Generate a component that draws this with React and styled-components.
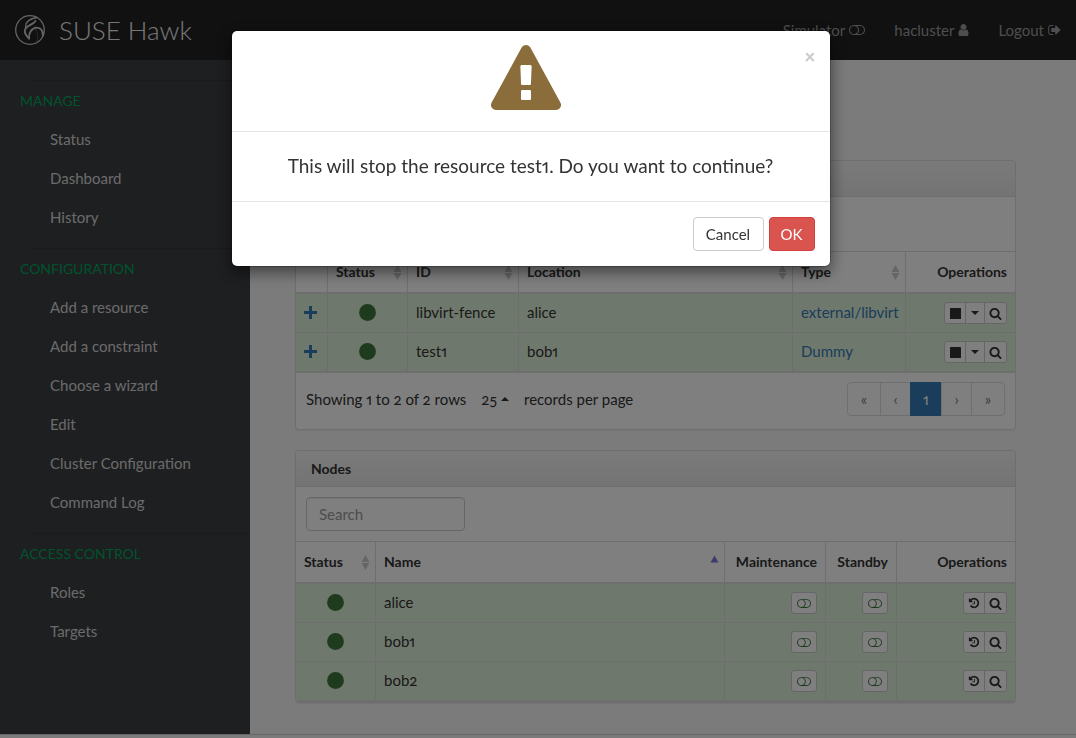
import React from 'react';
import styled, { createGlobalStyle, css } from 'styled-components';

const GlobalStyle = createGlobalStyle`
  *, *::before, *::after { box-sizing: border-box; }
  body {
    margin: 0;
    background: #f6f6f6;
    color: #333;
    font: 15px/20px Lato, "Open Sans", sans-serif;
    font-variant-numeric: oldstyle-nums proportional-nums;
  }
  button, input { font: inherit; color: inherit; }
  a { color: #337ab7; text-decoration: none; }
`;

const Header = styled.header`
  display: flex;
  align-items: center;
  justify-content: space-between;
  height: 60px;
  padding: 0 15px;
  background: #222;
`;

const Brand = styled.a`
  display: flex;
  align-items: center;
  gap: 14px;
  color: #eee;
  font-size: 26px;
  font-weight: 300;
  line-height: 32px;
`;

const TopNav = styled.nav`
  display: flex;
  gap: 29px;
`;

const TopLink = styled.a`
  display: flex;
  align-items: center;
  gap: 4px;
  color: #9d9d9d;
`;

const Body = styled.div`
  display: flex;
  min-height: 673px;
`;

const Sidebar = styled.nav`
  flex: none;
  width: 250px;
  padding-top: 20px;
  background: #3c3e42;
`;

const Section = styled.section`
  margin-bottom: 11px;

  &::before {
    content: "";
    display: block;
    height: 1px;
    margin-left: 30px;
    background: #343639;
  }
`;

const SectionTitle = styled.h2`
  margin: 0;
  padding-left: 20px;
  color: #00a65c;
  font-size: 14px;
  font-weight: 400;
  line-height: 40px;
  height: 39px;
  text-transform: uppercase;
`;

const SideLink = styled.a`
  display: block;
  padding-left: 50px;
  height: 39px;
  line-height: 38px;
  color: #d6d6d6;
`;

const Main = styled.main`
  flex: 1;
  display: flex;
  flex-direction: column;
  gap: 20px;
  padding: 100px 60px 31px 45px;
`;

const Footer = styled.footer`
  height: 5px;
  border-top: 1px solid #ccc;
`;

const Panel = styled.section`
  overflow: hidden;
  border: 1px solid #ddd;
  border-radius: 4px;
  background: #fff;
  box-shadow: 0 1px 1px rgba(0, 0, 0, 0.05);
`;

const PanelHeading = styled.h3`
  display: flex;
  align-items: center;
  height: 36px;
  margin: 0;
  padding: 0 15px;
  border-bottom: 1px solid #ddd;
  background: linear-gradient(#f5f5f5, #e8e8e8);
  font-size: 14px;
  font-weight: 700;
`;

const Toolbar = styled.div`
  height: 54px;
  padding: 10px;
`;

const SearchBox = styled.input`
  width: 159px;
  height: 34px;
  padding: 6px 12px;
  border: 1px solid #ccc;
  border-radius: 4px;
  background: #fff;
  box-shadow: inset 0 1px 1px rgba(0, 0, 0, 0.075);

  &::placeholder { color: #999; opacity: 1; }
`;

const Table = styled.table`
  width: 100%;
  table-layout: fixed;
  border-collapse: separate;
  border-spacing: 0;
  border-top: 1px solid #ddd;
  border-bottom: 2px solid #ddd;
`;

const Col = styled.col`
  width: ${(p) => p.$w};
`;

const cell = css`
  padding: 0 8px;
  text-align: ${(p) => p.$align || 'left'};
  white-space: nowrap;
  &:not(:last-child) { border-right: 1px solid #ddd; }
`;

const Th = styled.th`
  ${cell}
  height: 42px;
  border-bottom: 2px solid #ddd;
  font-size: 14px;
  font-weight: 700;
`;

const HeadInner = styled.div`
  display: flex;
  align-items: center;
  justify-content: ${(p) => (p.$right ? 'flex-end' : 'space-between')};
  margin-right: ${(p) => (p.$sortable ? '-3px' : '0')};
`;

const Td = styled.td`
  ${cell}
  height: 39px;
  padding-bottom: 2px;
  background: #dff0d8;
  tr:not(:last-child) > & { border-bottom: 1px solid #ddd; }
  tr:last-child > & { height: 38px; }
  & > svg { display: block; margin: 0 auto; }
`;

const ButtonGroup = styled.div`
  display: flex;
  justify-content: flex-end;
  margin-top: 2px;
`;

const SmallButton = styled.button`
  display: flex;
  align-items: center;
  justify-content: center;
  width: ${(p) => p.$w || 22}px;
  height: 22px;
  padding: 0;
  border: 1px solid #ccc;
  background: #fff;
  color: ${(p) => p.$color || '#333'};
  &:first-child { border-radius: 3px 0 0 3px; }
  &:last-child { border-radius: 0 3px 3px 0; }
  &:only-child { border-radius: 3px; }
  & + & { margin-left: -1px; }
`;

const PlusButton = styled.button`
  display: flex;
  width: 100%;
  padding: 0;
  border: 0;
  background: none;
  color: #337ab7;
`;

const TableFooter = styled.div`
  display: flex;
  justify-content: space-between;
  padding: 9px 10px 13px;
`;

const Records = styled.div`
  display: flex;
  align-items: center;
  gap: 15px;
  height: 34px;
`;

const PageSize = styled.button`
  display: flex;
  align-items: center;
  gap: 4px;
  padding: 0;
  border: 0;
  background: none;
`;

const Pager = styled.nav`
  display: flex;
`;

const PageLink = styled.a`
  width: ${(p) => p.$w}px;
  height: 34px;
  border: 1px solid ${(p) => (p.$active ? '#337ab7' : '#ddd')};
  background: ${(p) => (p.$active ? '#337ab7' : '#fff')};
  color: ${(p) => (p.$active ? '#fff' : '#777')};
  line-height: 32px;
  text-align: center;
  & + & { margin-left: -1px; }
  &:first-child { border-radius: 4px 0 0 4px; }
  &:last-child { border-radius: 0 4px 4px 0; }
`;

const Backdrop = styled.div`
  position: fixed;
  inset: 0;
  padding: 30px 15px 0 0;
  background: rgba(0, 0, 0, 0.5);
`;

const Dialog = styled.div`
  max-width: 600px;
  margin: 0 auto;
  border: 1px solid rgba(0, 0, 0, 0.2);
  border-radius: 6px;
  background: #fff;
  background-clip: padding-box;
  box-shadow: 0 5px 15px rgba(0, 0, 0, 0.5);
`;

const DialogHeader = styled.div`
  display: flex;
  align-items: flex-start;
  height: 101px;
  padding: 14px 15px;
  border-bottom: 1px solid #e5e5e5;
`;

const DialogIcon = styled.div`
  flex: 1;
  text-align: center;
  color: #8a6d3b;
`;

const CloseButton = styled.button`
  width: 10px;
  padding: 0;
  border: 0;
  background: none;
  color: #ccc;
  font-size: 20px;
  font-weight: 900;
`;

const Message = styled.p`
  margin: 0;
  padding: 21px 15px 23px;
  border-bottom: 1px solid #e5e5e5;
  font-size: 19px;
  line-height: 25px;
  text-align: center;
`;

const Actions = styled.div`
  display: flex;
  justify-content: flex-end;
  gap: 5px;
  padding: 15px;
`;

const Button = styled.button`
  height: 34px;
  width: ${(p) => p.$w}px;
  padding: 0;
  border: 1px solid ${(p) => (p.$danger ? '#d43f3a' : '#ccc')};
  border-radius: 4px;
  background: ${(p) => (p.$danger ? '#d9534f' : '#fff')};
  color: ${(p) => (p.$danger ? '#fff' : '#333')};
`;

const paths = {
  search:
    'M1216 832q0-185-131.5-316.5t-316.5-131.5-316.5 131.5-131.5 316.5 131.5 316.5 316.5 131.5 316.5-131.5 131.5-316.5zm512 832q0 52-38 90t-90 38q-54 0-90-38l-343-342q-179 124-399 124-143 0-273.5-55.5t-225-150-150-225-55.5-273.5 55.5-273.5 150-225 225-150 273.5-55.5 273.5 55.5 225 150 150 225 55.5 273.5q0 220-124 399l343 343q37 37 37 90z',
  history:
    'M1664 896q0 156-61 298t-164 245-245 164-298 61q-172 0-327-72.5t-264-204.5q-7-10-6.5-22.5t8.5-20.5l137-138q10-9 25-9 16 2 23 12 73 95 179 147t225 52q104 0 198.5-40.5t163.5-109.5 109.5-163.5 40.5-198.5-40.5-198.5-109.5-163.5-163.5-109.5-198.5-40.5q-98 0-188 35.5t-160 101.5l137 138q31 30 14 69-17 40-59 40h-448q-26 0-45-19t-19-45v-448q0-42 40-59 39-17 69 14l130 129q107-101 244.5-156.5t284.5-55.5q156 0 298 61t245 164 164 245 61 298zm-640-288v448q0 14-9 23t-23 9h-320q-14 0-23-9t-9-23v-64q0-14 9-23t23-9h224v-352q0-14 9-23t23-9h64q14 0 23 9t9 23z',
  warning:
    'M1024 1375v-190q0-14-9.5-23.5t-22.5-9.5h-192q-13 0-22.5 9.5t-9.5 23.5v190q0 14 9.5 23.5t22.5 9.5h192q13 0 22.5-9.5t9.5-23.5zm-2-374l18-459q0-12-10-19-13-11-24-11h-220q-11 0-24 11-10 7-10 21l17 457q0 10 10 16.5t24 6.5h185q14 0 23.5-6.5t10.5-16.5zm-14-934l768 1408q35 63-2 126-17 29-46.5 46t-63.5 17h-1536q-34 0-63.5-17t-46.5-46q-37-63-2-126l768-1408q17-31 47-49t65-18 65 18 47 49z',
  signOut:
    'M704 1440q0 4 1 20t.5 26.5-3 23.5-10 19.5-20.5 6.5h-320q-119 0-203.5-84.5t-84.5-203.5v-704q0-119 84.5-203.5t203.5-84.5h320q13 0 22.5 9.5t9.5 22.5q0 4 1 20t.5 26.5-3 23.5-10 19.5-20.5 6.5h-320q-66 0-113 47t-47 113v704q0 66 47 113t113 47h312l11.5 1 11.5 3 8 5.5 7 9 2 13.5zm928-544q0 26-19 45l-544 544q-19 19-45 19t-45-19-19-45v-288h-448q-26 0-45-19t-19-45v-384q0-26 19-45t45-19h448v-288q0-26 19-45t45-19 45 19l544 544q19 19 19 45z',
  user:
    'M1536 1399q0 109-62.5 187t-150.5 78h-854q-88 0-150.5-78t-62.5-187q0-85 8.5-160.5t31.5-152 58.5-131 94-89 134.5-34.5q131 128 313 128t313-128q76 0 134.5 34.5t94 89 58.5 131 31.5 152 8.5 160.5zm-256-887q0 159-112.5 271.5t-271.5 112.5-271.5-112.5-112.5-271.5 112.5-271.5 271.5-112.5 271.5 112.5 112.5 271.5z',
  toggle:
    'M1152 896q0-104-40.5-198.5t-109.5-163.5-163.5-109.5-198.5-40.5-198.5 40.5-163.5 109.5-109.5 163.5-40.5 198.5 40.5 198.5 109.5 163.5 163.5 109.5 198.5 40.5 198.5-40.5 163.5-109.5 109.5-163.5 40.5-198.5zm768 0q0-104-40.5-198.5t-109.5-163.5-163.5-109.5-198.5-40.5h-386q119 90 188.5 224t69.5 288-69.5 288-188.5 224h386q104 0 198.5-40.5t163.5-109.5 109.5-163.5 40.5-198.5zm128 0q0 130-51 248.5t-136.5 204-204 136.5-248.5 51h-768q-130 0-248.5-51t-204-136.5-136.5-204-51-248.5 51-248.5 136.5-204 204-136.5 248.5-51h768q130 0 248.5 51t204 136.5 136.5 204 51 248.5z',
};

const Icon = ({ name, size = 14, height, box = '0 0 1792 1792' }) => (
  <svg width={size} height={height || size} viewBox={box} fill="currentColor" aria-hidden="true">
    <path d={paths[name]} />
  </svg>
);

const Toggle = ({ size = 14, height = 9 }) => (
  <Icon name="toggle" size={size} height={height} box="0 256 2048 1280" />
);

const Plus = () => (
  <svg width="13" height="13" viewBox="0 0 13 13" fill="currentColor" aria-hidden="true">
    <path d="M5 0h3v5h5v3H8v5H5V8H0V5h5z" />
  </svg>
);

const Dot = () => (
  <svg width="17" height="17" viewBox="0 0 17 17" role="img" aria-label="running">
    <circle cx="8.5" cy="8.5" r="8.4" fill="#3c763d" />
  </svg>
);

const Stop = () => (
  <svg width="11" height="11" viewBox="0 0 11 11" aria-hidden="true">
    <rect width="11" height="11" rx="0.5" fill="currentColor" />
  </svg>
);

const Caret = ({ up }) => (
  <svg width="8" height="4" viewBox="0 0 8 4" fill="currentColor" aria-hidden="true">
    <path d={up ? 'M0 4L4 0L8 4z' : 'M0 0H8L4 4z'} />
  </svg>
);

const Sort = () => (
  <svg width="9" height="15" viewBox="0 0 9 15" fill="#ccc" aria-hidden="true">
    <path d="M0.500 7L4.500 0L8.500 7zM0.500 8H8.500L4.500 15z" />
  </svg>
);

const SortAsc = () => (
  <svg width="9" height="15" viewBox="0 0 9 15" fill="#7878d8" aria-hidden="true">
    <path d="M0.500 7.500L4.500 0.500L8.500 7.500z" />
  </svg>
);

const Logo = () => (
  <svg width="30" height="30" viewBox="0 0 30 30" fill="none" stroke="#ccc" strokeLinecap="round" aria-hidden="true">
    <circle cx="15" cy="15" r="14.3" strokeWidth="1.3" />
    <path d="M22 2.500C15 3.500 10.500 7 10.500 12" strokeWidth="1.300" />
    <path d="M20.500 6C18 10 10.500 10.500 9.800 15.500C9.600 18 10.500 20 14 23.500" strokeWidth="1.800" />
    <path d="M14 23.500C13.500 18 16.500 13 21.500 12.600C26 12.500 28 16 27.800 20" strokeWidth="1.800" />
    <path d="M20 14C23 17 23.500 22 21.500 27" stroke="#555" />
  </svg>
);

const sections = [
  ['Manage', ['Status', 'Dashboard', 'History']],
  ['Configuration', ['Add a resource', 'Add a constraint', 'Choose a wizard', 'Edit', 'Cluster Configuration', 'Command Log']],
  ['Access Control', ['Roles', 'Targets']],
];

const resources = [
  ['libvirt-fence', 'alice', 'external/libvirt'],
  ['test1', 'bob1', 'Dummy'],
];

const Head = ({ label, sort, right }) => (
  <Th scope="col">
    <HeadInner $right={right} $sortable={!!sort}>
      <span>{label}</span>
      {sort === 'both' && <Sort />}
      {sort === 'asc' && <SortAsc />}
    </HeadInner>
  </Th>
);

const ToggleCell = ({ label }) => (
  <Td>
    <ButtonGroup>
      <SmallButton $w={26} $color="#3c763d" aria-label={label}><Toggle /></SmallButton>
    </ButtonGroup>
  </Td>
);

export default function App() {
  return (
    <>
      <GlobalStyle />
      <Header>
        <Brand href="#"><Logo />SUSE Hawk</Brand>
        <TopNav>
          <TopLink href="#">Simulator <Toggle size={16} height={10} /></TopLink>
          <TopLink href="#">hacluster <Icon name="user" size={11} height={14} box="192 0 1408 1792" /></TopLink>
          <TopLink href="#">Logout <Icon name="signOut" size={13} height={14} box="32 0 1664 1792" /></TopLink>
        </TopNav>
      </Header>
      <Body>
        <Sidebar>
          {sections.map(([title, links]) => (
            <Section key={title}>
              <SectionTitle>{title}</SectionTitle>
              {links.map((l) => <SideLink href="#" key={l}>{l}</SideLink>)}
            </Section>
          ))}
        </Sidebar>
        <Main>
          <Panel>
            <PanelHeading />
            <Toolbar />
            <Table>
              <colgroup>
                <Col $w="32px" /><Col $w="80px" /><Col $w="111px" /><Col $w="auto" /><Col $w="113px" /><Col $w="109px" />
              </colgroup>
              <thead>
                <tr>
                  <Th />
                  <Head label="Status" sort="both" />
                  <Head label="ID" sort="both" />
                  <Head label="Location" sort="both" />
                  <Head label="Type" sort="both" />
                  <Head label="Operations" right />
                </tr>
              </thead>
              <tbody>
                {resources.map(([id, location, type]) => (
                  <tr key={id}>
                    <Td><PlusButton aria-label="Expand"><Plus /></PlusButton></Td>
                    <Td><Dot /></Td>
                    <Td>{id}</Td>
                    <Td>{location}</Td>
                    <Td><a href="#">{type}</a></Td>
                    <Td>
                      <ButtonGroup>
                        <SmallButton aria-label="Stop"><Stop /></SmallButton>
                        <SmallButton $w={20} aria-label="More"><Caret /></SmallButton>
                        <SmallButton $w={23} aria-label="Details"><Icon name="search" size={13} /></SmallButton>
                      </ButtonGroup>
                    </Td>
                  </tr>
                ))}
              </tbody>
            </Table>
            <TableFooter>
              <Records>
                <span>Showing 1 to 2 of 2 rows</span>
                <PageSize>25 <Caret up /></PageSize>
                <span>records per page</span>
              </Records>
              <Pager>
                <PageLink href="#" $w={34}>«</PageLink>
                <PageLink href="#" $w={31}>‹</PageLink>
                <PageLink href="#" $w={32} $active>1</PageLink>
                <PageLink href="#" $w={31}>›</PageLink>
                <PageLink href="#" $w={34}>»</PageLink>
              </Pager>
            </TableFooter>
          </Panel>
          <Panel>
            <PanelHeading>Nodes</PanelHeading>
            <Toolbar><SearchBox type="text" placeholder="Search" aria-label="Search" /></Toolbar>
            <Table>
              <colgroup>
                <Col $w="80px" /><Col $w="auto" /><Col $w="101px" /><Col $w="71px" /><Col $w="118px" />
              </colgroup>
              <thead>
                <tr>
                  <Head label="Status" sort="both" />
                  <Head label="Name" sort="asc" />
                  <Head label="Maintenance" right />
                  <Head label="Standby" right />
                  <Head label="Operations" right />
                </tr>
              </thead>
              <tbody>
                {['alice', 'bob1', 'bob2'].map((name) => (
                  <tr key={name}>
                    <Td><Dot /></Td>
                    <Td>{name}</Td>
                    <ToggleCell label="Maintenance" />
                    <ToggleCell label="Standby" />
                    <Td>
                      <ButtonGroup>
                        <SmallButton aria-label="Recent events"><Icon name="history" size={12} /></SmallButton>
                        <SmallButton $w={23} aria-label="Details"><Icon name="search" size={13} /></SmallButton>
                      </ButtonGroup>
                    </Td>
                  </tr>
                ))}
              </tbody>
            </Table>
          </Panel>
        </Main>
      </Body>
      <Footer />
      <Backdrop>
        <Dialog role="dialog" aria-modal="true">
          <DialogHeader>
            <DialogIcon><Icon name="warning" size={70} /></DialogIcon>
            <CloseButton aria-label="Close">×</CloseButton>
          </DialogHeader>
          <Message>This will stop the resource test1. Do you want to continue?</Message>
          <Actions>
            <Button $w={71}>Cancel</Button>
            <Button $w={46} $danger>OK</Button>
          </Actions>
        </Dialog>
      </Backdrop>
    </>
  );
}
